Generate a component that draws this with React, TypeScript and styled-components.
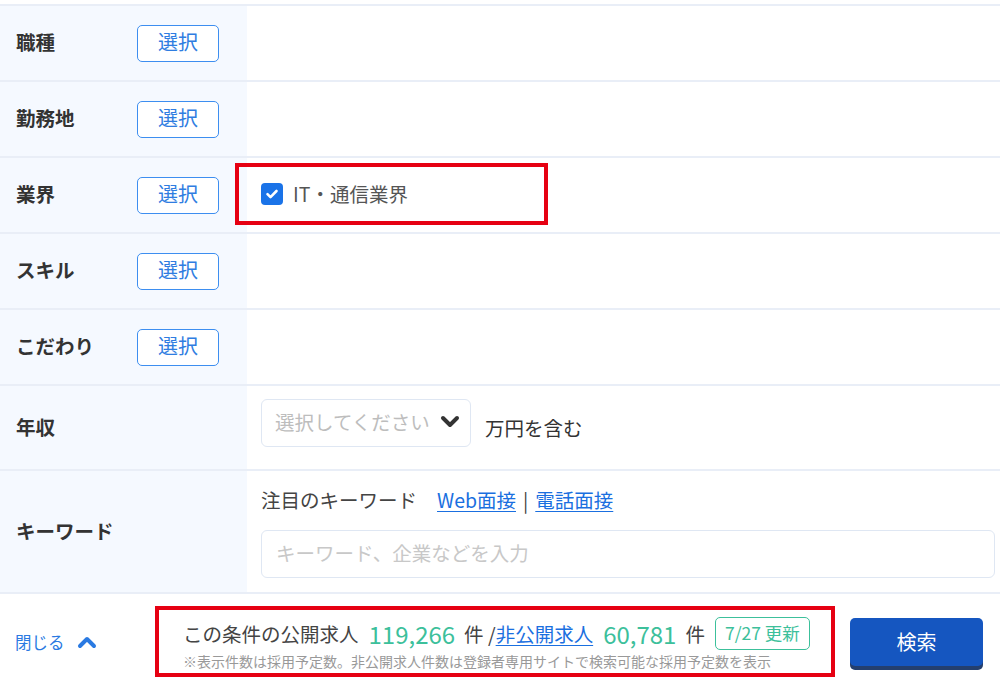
import React from 'react';
import styled, { createGlobalStyle } from 'styled-components';

const GlobalStyle = createGlobalStyle`
  html, body {
    margin: 0;
    padding: 0;
    background: #fff;
  }
  body {
    font-family: "Noto Sans CJK JP", "Noto Sans", sans-serif;
    color: #333;
  }
`;

const Page = styled.div`
  width: 1000px;
  height: 681px;
  overflow: hidden;
  padding-top: 4px;
  box-sizing: border-box;
`;

const Table = styled.div`
  border-top: 2px solid #e9eef7;
`;

const Row = styled.div<{ $height: number }>`
  position: relative;
  display: grid;
  grid-template-columns: 247px 1fr;
  height: ${props => props.$height}px;
  border-bottom: 2px solid #e9eef7;
`;

const LabelCell = styled.div`
  display: flex;
  align-items: center;
  padding-left: 16px;
  background: #f5f9ff;
`;

const Label = styled.span`
  width: 121px;
  margin-top: -3px;
  font-size: 19.5px;
  font-weight: 700;
  color: #333;
`;

const SelectButton = styled.button`
  width: 82px;
  height: 37px;
  border: 1.5px solid #3d8ef0;
  border-radius: 5px;
  background: #fff;
  color: #2f7de1;
  font-family: inherit;
  font-size: 20px;
  line-height: 1;
  padding: 0 0 3px;
  cursor: pointer;
`;

const ContentCell = styled.div<{ $column?: boolean }>`
  display: flex;
  flex-direction: ${props => (props.$column ? 'column' : 'row')};
  align-items: ${props => (props.$column ? 'stretch' : 'center')};
  justify-content: ${props => (props.$column ? 'center' : 'flex-start')};
  gap: ${props => (props.$column ? '16px' : '14px')};
  padding: 0 5px 0 14px;
`;

const CheckItem = styled.label`
  display: flex;
  align-items: center;
  gap: 10px;
  margin-top: -3px;
  font-size: 19.5px;
  color: #555;
`;

const CheckBox = styled.span`
  width: 22px;
  height: 22px;
  border-radius: 4px;
  background: #1a73e8;
  display: flex;
  align-items: center;
  justify-content: center;
`;

const Highlight = styled.div`
  position: absolute;
  border: 4px solid #e60012;
  box-sizing: border-box;
  pointer-events: none;
`;

const Dropdown = styled.div`
  width: 210px;
  height: 48px;
  box-sizing: border-box;
  border: 1.5px solid #dfe7f3;
  border-radius: 6px;
  display: flex;
  align-items: center;
  justify-content: space-between;
  padding: 0 9px 3px 13px;
  margin-top: -10px;
  font-size: 19.5px;
  color: #bdbdbd;
`;

const Unit = styled.span`
  font-size: 19.5px;
  color: #333;
`;

const KeywordLine = styled.div`
  display: flex;
  align-items: center;
  font-size: 19.5px;
  color: #444;
`;

const KeywordTitle = styled.span`
  margin-right: 20px;
`;

const Link = styled.a`
  color: #1a6fe0;
  text-decoration: underline;
  text-underline-offset: 3px;
`;

const Divider = styled.span`
  margin: 0 7px;
  color: #444;
`;

const KeywordInput = styled.input`
  height: 48px;
  box-sizing: border-box;
  border: 1.5px solid #dfe7f3;
  border-radius: 6px;
  padding: 0 14px 3px;
  font-family: inherit;
  font-size: 19.5px;
  color: #333;
  outline: none;

  &::placeholder {
    color: #c8c8c8;
  }
`;

const Footer = styled.div`
  display: flex;
  align-items: flex-start;
  height: 87px;
  padding-top: 12px;
  box-sizing: border-box;
`;

const CloseToggle = styled.button`
  width: 155px;
  height: 71px;
  display: flex;
  align-items: center;
  gap: 12px;
  padding: 0 0 0 15px;
  border: none;
  background: none;
  color: #2a7ae2;
  font-family: inherit;
  font-size: 16.5px;
  cursor: pointer;
`;

const CountBox = styled.div`
  width: 680px;
  height: 71px;
  box-sizing: border-box;
  border: 4px solid #e60012;
  padding: 5px 0 0 24px;
  display: flex;
  flex-direction: column;
`;

const CountLine = styled.div`
  display: flex;
  align-items: center;
  font-size: 19.5px;
  color: #444;
  white-space: nowrap;
  height: 36px;
`;

const Count = styled.span`
  color: #3cc09b;
  font-size: 24px;
  margin: 0 9px 0 10px;
`;

const Badge = styled.span`
  margin-left: 10px;
  height: 33px;
  box-sizing: border-box;
  padding: 0 9px 2px;
  border: 1.5px solid #3cc09b;
  border-radius: 5px;
  color: #3cc09b;
  font-size: 17.5px;
  display: flex;
  align-items: center;
`;

const Note = styled.div`
  font-size: 14px;
  color: #999;
  white-space: nowrap;
`;

const SearchButton = styled.button`
  margin: 12px 0 0 15px;
  width: 133px;
  height: 48px;
  border: none;
  border-radius: 5px;
  background: #1556c0;
  box-shadow: 0 4px 0 #243f6e;
  color: #fff;
  font-family: inherit;
  font-size: 20px;
  padding-bottom: 3px;
  cursor: pointer;
`;

const Check = () => (
  <svg width="14" height="14" viewBox="0 0 14 14">
    <path d="M2.5 7.2l3 3 6-6.2" fill="none" stroke="#fff" strokeWidth="2.6" strokeLinecap="round" strokeLinejoin="round" />
  </svg>
);

const ChevronDown = () => (
  <svg width="22" height="16" viewBox="0 0 22 16">
    <path d="M4 5l7 7 7-7" fill="none" stroke="#333" strokeWidth="4" strokeLinecap="round" strokeLinejoin="round" />
  </svg>
);

const ChevronUp = () => (
  <svg width="20" height="14" viewBox="0 0 20 14">
    <path d="M3 11l7-7 7 7" fill="none" stroke="#2a7ae2" strokeWidth="4" strokeLinecap="round" strokeLinejoin="round" />
  </svg>
);

const selectRows = ['職種', '勤務地', '業界', 'スキル', 'こだわり'];

const App: React.FC = () => {
  return (
    <Page>
      <GlobalStyle />
      <Table>
        {selectRows.map(label => (
          <Row key={label} $height={74}>
            <LabelCell>
              <Label>{label}</Label>
              <SelectButton type="button">選択</SelectButton>
            </LabelCell>
            <ContentCell>
              {label === '業界' && (
                <CheckItem>
                  <CheckBox>
                    <Check />
                  </CheckBox>
                  IT・通信業界
                </CheckItem>
              )}
            </ContentCell>
            {label === '業界' && <Highlight style={{ left: 235, top: 5, width: 313, height: 62 }} />}
          </Row>
        ))}

        <Row $height={83}>
          <LabelCell>
            <Label>年収</Label>
          </LabelCell>
          <ContentCell>
            <Dropdown>
              選択してください
              <ChevronDown />
            </Dropdown>
            <Unit>万円を含む</Unit>
          </ContentCell>
        </Row>

        <Row $height={121}>
          <LabelCell>
            <Label>キーワード</Label>
          </LabelCell>
          <ContentCell $column>
            <KeywordLine>
              <KeywordTitle>注目のキーワード</KeywordTitle>
              <Link href="#">Web面接</Link>
              <Divider>|</Divider>
              <Link href="#">電話面接</Link>
            </KeywordLine>
            <KeywordInput placeholder="キーワード、企業などを入力" />
          </ContentCell>
        </Row>
      </Table>

      <Footer>
        <CloseToggle type="button">
          閉じる
          <ChevronUp />
        </CloseToggle>
        <CountBox>
          <CountLine>
            この条件の公開求人<Count>119,266</Count>件 /<Link href="#">非公開求人</Link>
            <Count>60,781</Count>件
            <Badge>7/27 更新</Badge>
          </CountLine>
          <Note>※表示件数は採用予定数。非公開求人件数は登録者専用サイトで検索可能な採用予定数を表示</Note>
        </CountBox>
        <SearchButton type="button">検索</SearchButton>
      </Footer>
    </Page>
  );
};

export default App;
